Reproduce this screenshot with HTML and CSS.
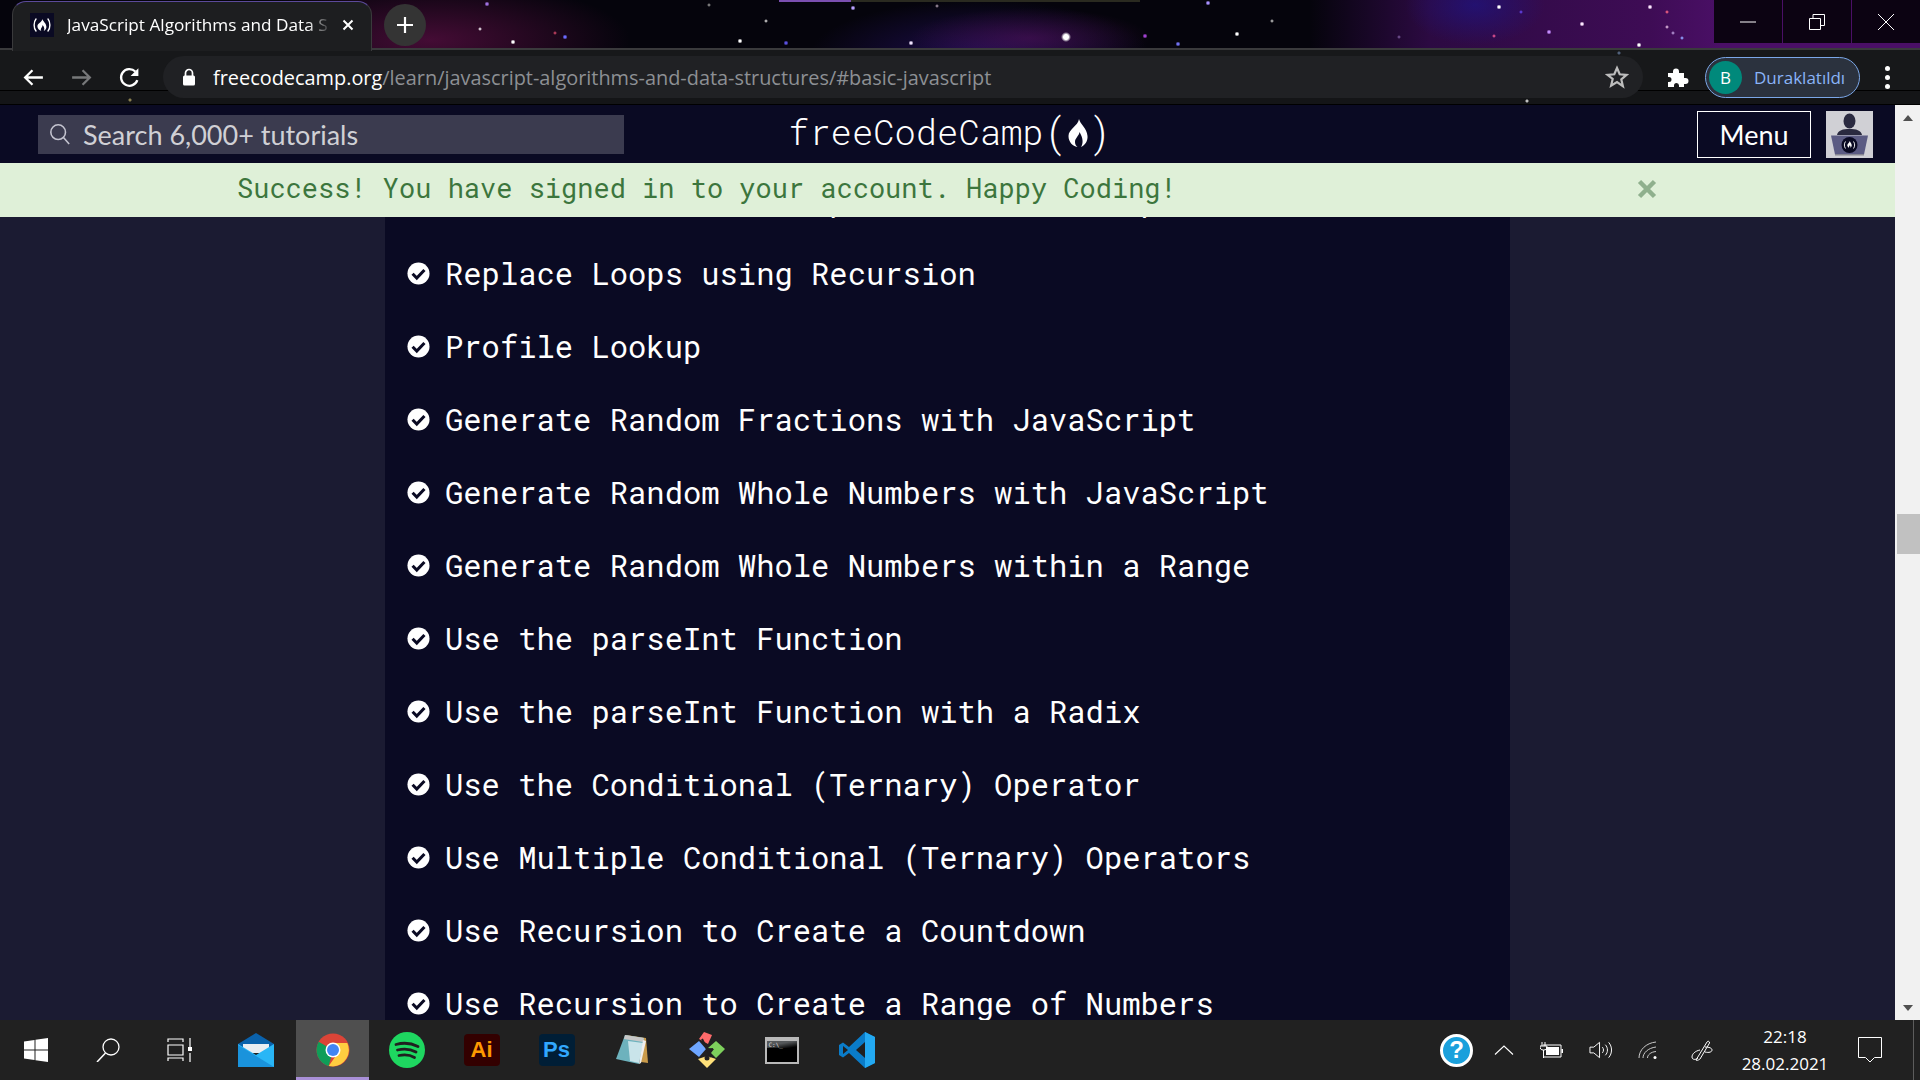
FILE: index.html
```html
<!DOCTYPE html>
<html lang="en">
<head>
    <meta charset="UTF-8">
    <meta name="viewport" content="width=device-width, initial-scale=1.0">
    <title>JavaScript Algorithms and Data Structures | freeCodeCamp.org</title>
    <link rel="stylesheet" href="styles.css">
</head>
<body>

<!-- Chrome window -->
<div class="chrome">
    <div class="titlebar">
        <div class="tab">
            <svg class="tab-icon" viewBox="0 0 24 24"><rect width="24" height="24" fill="#0a0a23"/><path d="M6 6C3.500 9 3.500 15 6 18M18 6c2.500 3 2.500 9 0 12" fill="none" stroke="#fff" stroke-width="1.400" stroke-linecap="round"/><path d="M12.500 6c.4 2.500 3.700 4 3.900 7.700.1 1.800-1 3.400-2.700 4.300 1-1.800.8-3.500-1-6-.2 2-1.900 2.800-1.900 4.700 0 .5.200 1 .6 1.300-2.300-.5-4-2.500-4-4.700 0-3.300 4.600-4 5.100-7.300z" fill="#fff"/></svg>
            <span class="tab-title">JavaScript Algorithms and Data S</span>
            <svg class="tab-close" viewBox="0 0 12 12"><path d="M1.500 1.500l9 9M10.500 1.500l-9 9" stroke="#fff" stroke-width="2"/></svg>
        </div>
        <div class="new-tab">
            <svg viewBox="0 0 18 18" width="18" height="18"><path d="M9 1v16M1 9h16" stroke="#fff" stroke-width="2.200"/></svg>
        </div>
        <div class="load-strip"></div>
        <div class="window-btns">
            <div class="window-btn"><svg viewBox="0 0 16 16" width="16" height="16"><path d="M0 8h16" stroke="#fff"/></svg></div>
            <div class="window-btn"><svg viewBox="0 0 16 16" width="16" height="16"><path d="M.5 4.500h11v11H.5zM4 4.500V.5h11.500v11h-4" fill="none" stroke="#fff"/></svg></div>
            <div class="window-btn"><svg viewBox="0 0 16 16" width="16" height="16"><path d="M0 0l16 16M16 0L0 16" stroke="#fff"/></svg></div>
        </div>
    </div>
    <div class="toolbar">
        <svg class="tool-icon" viewBox="0 0 24 24"><path d="M21 12H4M11 5l-7 7 7 7" fill="none" stroke="#fff" stroke-width="2.200"/></svg>
        <svg class="tool-icon" viewBox="0 0 24 24"><path d="M3 12h17M13 5l7 7-7 7" fill="none" stroke="#77787a" stroke-width="2.200"/></svg>
        <svg class="tool-icon" viewBox="0 0 24 24"><path d="M19.500 14.500A8 8 0 1 1 17.600 6.300" fill="none" stroke="#fff" stroke-width="2.200"/><path d="M20.500 3v7.500H13z" fill="#fff"/></svg>
        <div class="omnibox">
            <svg class="lock" viewBox="0 0 14 18"><path d="M3.500 8V5a3.500 3.500 0 0 1 7 0v3" fill="none" stroke="#fff" stroke-width="1.700"/><rect x="1" y="7.500" width="12" height="10" rx="1.500" fill="#fff"/></svg>
            <span class="url"><span class="url-host">freecodecamp.org</span>/learn/javascript-algorithms-and-data-structures/#basic-javascript</span>
            <svg class="star" viewBox="0 0 24 24"><path d="M12 3l2.700 6.300 6.800.6-5.200 4.500 1.600 6.700L12 17l-5.900 3.600 1.600-6.700L2.500 9.900l6.800-.6z" fill="none" stroke="#bdbdbd" stroke-width="2.200"/></svg>
        </div>
        <svg class="puzzle" viewBox="0 0 24 24"><path d="M3 8h5V6.500a3 3 0 0 1 6 0V8h5v5h1.500a3 3 0 0 1 0 6H19v3h-5v-1.500a2.500 2.500 0 0 0-5 0V22H3v-5h1a2.500 2.500 0 0 0 0-5H3z" fill="#fff"/></svg>
        <div class="profile">
            <span class="profile-avatar">B</span>
            <span class="profile-name">Duraklatıldı</span>
        </div>
        <div class="dots"><i></i><i></i><i></i></div>
    </div>
</div>

<!-- Page -->
<div class="viewport">
    <div class="page">
        <header class="fcc-header">
            <div class="search">
                <svg class="search-icon" viewBox="0 0 24 24"><circle cx="10" cy="10" r="8" fill="none" stroke="#c4c4d0" stroke-width="1.700"/><path d="M15.800 15.800L22 23" stroke="#c4c4d0" stroke-width="1.700"/></svg>
                <span>Search 6,000+ tutorials</span>
            </div>
            <div class="logo">
                <span>freeCodeCamp</span><span class="paren">(</span><svg class="flame" viewBox="0 0 20 28"><path d="M11 0C12 5 19 9 19.500 17 20 22 17 26 13 28 15.500 24 15 19 11.500 13 11 17 7 19 7 23 7 25 8 27 9.500 28 4.500 27 .5 23 .5 17 .5 10 10 7 11 0z" fill="#fff"/></svg><span class="paren">)</span>
            </div>
            <div class="header-right">
                <div class="menu-btn">Menu</div>
                <svg class="avatar" viewBox="0 0 47 47">
                    <rect width="47" height="47" fill="#d0d0d5"/>
                    <ellipse cx="23.500" cy="10" rx="6" ry="7.500" fill="#2a2a40"/>
                    <path d="M11 24c1-5 6-6 12.500-6s11.500 1 12.500 6z" fill="#2a2a40"/>
                    <path d="M5 24.500h37l-4 19H9z" fill="#5b5b83"/>
                    <rect x="9" y="43" width="29" height="1.500" fill="#858591"/>
                    <circle cx="23.500" cy="34" r="8" fill="#0a0a23"/>
                    <path d="M19.500 30.500c-1.500 2-1.500 5 0 7M27.500 30.500c1.500 2 1.500 5 0 7" fill="none" stroke="#fff" stroke-width=".9"/>
                    <path d="M23.800 30c.3 1.500 1.900 2.200 1.900 4.200 0 1-.5 2-1.400 2.600.3-1 .2-1.700-.6-2.500-.2.800-.8 1.200-.8 1.800 0 .3.100.5.300.7-1.100-.3-1.900-1.400-1.900-2.500 0-1.700 2.200-2.300 2.500-4.300z" fill="#fff"/>
                </svg>
            </div>
        </header>
        <main class="content">
            <div class="flash">
                <span class="flash-text">Success! You have signed in to your account. Happy Coding!</span>
                <svg class="flash-close" viewBox="0 0 20 20"><path d="M2.500 2.500l15 15M17.500 2.500l-15 15" stroke="#8fb08d" stroke-width="4.500"/></svg>
            </div>
            <ul class="lessons">
                <li><svg class="check" viewBox="0 0 24 24"><circle cx="12" cy="12" r="11.500" fill="#fff"/><path d="M5.800 12.300l4.400 4.400 8-8.300" fill="none" stroke="#0a0a23" stroke-width="3.200"/></svg><span>Iterate with JavaScript Do...While Loops</span></li>
                <li><svg class="check" viewBox="0 0 24 24"><circle cx="12" cy="12" r="11.500" fill="#fff"/><path d="M5.800 12.300l4.400 4.400 8-8.300" fill="none" stroke="#0a0a23" stroke-width="3.200"/></svg><span>Replace Loops using Recursion</span></li>
                <li><svg class="check" viewBox="0 0 24 24"><circle cx="12" cy="12" r="11.500" fill="#fff"/><path d="M5.800 12.300l4.400 4.400 8-8.300" fill="none" stroke="#0a0a23" stroke-width="3.200"/></svg><span>Profile Lookup</span></li>
                <li><svg class="check" viewBox="0 0 24 24"><circle cx="12" cy="12" r="11.500" fill="#fff"/><path d="M5.800 12.300l4.400 4.400 8-8.300" fill="none" stroke="#0a0a23" stroke-width="3.200"/></svg><span>Generate Random Fractions with JavaScript</span></li>
                <li><svg class="check" viewBox="0 0 24 24"><circle cx="12" cy="12" r="11.500" fill="#fff"/><path d="M5.800 12.300l4.400 4.400 8-8.300" fill="none" stroke="#0a0a23" stroke-width="3.200"/></svg><span>Generate Random Whole Numbers with JavaScript</span></li>
                <li><svg class="check" viewBox="0 0 24 24"><circle cx="12" cy="12" r="11.500" fill="#fff"/><path d="M5.800 12.300l4.400 4.400 8-8.300" fill="none" stroke="#0a0a23" stroke-width="3.200"/></svg><span>Generate Random Whole Numbers within a Range</span></li>
                <li><svg class="check" viewBox="0 0 24 24"><circle cx="12" cy="12" r="11.500" fill="#fff"/><path d="M5.800 12.300l4.400 4.400 8-8.300" fill="none" stroke="#0a0a23" stroke-width="3.200"/></svg><span>Use the parseInt Function</span></li>
                <li><svg class="check" viewBox="0 0 24 24"><circle cx="12" cy="12" r="11.500" fill="#fff"/><path d="M5.800 12.300l4.400 4.400 8-8.300" fill="none" stroke="#0a0a23" stroke-width="3.200"/></svg><span>Use the parseInt Function with a Radix</span></li>
                <li><svg class="check" viewBox="0 0 24 24"><circle cx="12" cy="12" r="11.500" fill="#fff"/><path d="M5.800 12.300l4.400 4.400 8-8.300" fill="none" stroke="#0a0a23" stroke-width="3.200"/></svg><span>Use the Conditional (Ternary) Operator</span></li>
                <li><svg class="check" viewBox="0 0 24 24"><circle cx="12" cy="12" r="11.500" fill="#fff"/><path d="M5.800 12.300l4.400 4.400 8-8.300" fill="none" stroke="#0a0a23" stroke-width="3.200"/></svg><span>Use Multiple Conditional (Ternary) Operators</span></li>
                <li><svg class="check" viewBox="0 0 24 24"><circle cx="12" cy="12" r="11.500" fill="#fff"/><path d="M5.800 12.300l4.400 4.400 8-8.300" fill="none" stroke="#0a0a23" stroke-width="3.200"/></svg><span>Use Recursion to Create a Countdown</span></li>
                <li><svg class="check" viewBox="0 0 24 24"><circle cx="12" cy="12" r="11.500" fill="#fff"/><path d="M5.800 12.300l4.400 4.400 8-8.300" fill="none" stroke="#0a0a23" stroke-width="3.200"/></svg><span>Use Recursion to Create a Range of Numbers</span></li>
            </ul>
        </main>
    </div>
    <div class="scrollbar">
        <div class="arrow-up"></div>
        <div class="scroll-track"><div class="scroll-thumb"></div></div>
        <div class="arrow-down"></div>
    </div>
</div>

<!-- Windows taskbar -->
<footer class="taskbar">
    <div class="task-slot task-system">
        <svg viewBox="0 0 24 24" width="24" height="24"><path d="M0 3.400L10.500 2v9.500H0zM11.500 1.800L24 0v11.500H11.500zM0 12.500h10.500V22L0 20.600zM11.500 12.500H24V24l-12.500-1.800z" fill="#fff"/></svg>
    </div>
    <div class="task-slot task-system">
        <svg viewBox="0 0 24 24" width="24" height="24"><circle cx="15" cy="9" r="8" fill="none" stroke="#fff" stroke-width="1.300"/><path d="M9.500 15L1 24" stroke="#fff" stroke-width="1.500"/></svg>
    </div>
    <div class="task-slot task-system">
        <svg viewBox="0 0 26 24" width="26" height="24"><path d="M1 4V1h15v3M1 7h15v10H1zM1 23v-3h15v3M23 0v9M23 15v9" fill="none" stroke="#fff" stroke-width="1.200"/><rect x="21" y="9" width="4" height="4" fill="#fff"/></svg>
    </div>
    <div class="task-slot task-mail">
        <svg viewBox="0 0 36 34" width="36" height="34"><path d="M18 0l18 11v4H0v-4z" fill="#0a62ac"/><path d="M5 11h26v9H5z" fill="#e9edf2"/><path d="M0 11l18 11 18-11v23H0z" fill="#29b6f6"/><path d="M0 12l18 11 18 11H0z" fill="#1a93dc"/></svg>
    </div>
    <div class="task-slot task-active">
        <svg viewBox="0 0 34 34" width="34" height="34">
            <circle cx="17" cy="17" r="16.500" fill="#db4437"/>
            <path d="M17 17L2.700 8.800A16.500 16.500 0 0 0 12.700 33z" fill="#0f9d58"/>
            <path d="M17 10h14.300A16.500 16.500 0 0 1 17 33.500L12.700 33 24 17z" fill="#ffcd40"/>
            <circle cx="17" cy="17" r="7.500" fill="#fff"/>
            <circle cx="17" cy="17" r="6" fill="#4285f4"/>
        </svg>
    </div>
    <div class="task-slot">
        <svg viewBox="0 0 36 36" width="36" height="36"><circle cx="18" cy="18" r="18" fill="#1ed760"/><path d="M7 12.500c7-2 15-1.500 22 2M8.500 18c6-1.500 13-1 18.500 2M10 23.500c5-1 11-.7 15.500 2" fill="none" stroke="#202020" stroke-width="2.800" stroke-linecap="round"/></svg>
    </div>
    <div class="task-slot">
        <div class="app-tile tile-ai">Ai</div>
    </div>
    <div class="task-slot">
        <div class="app-tile tile-ps">Ps</div>
    </div>
    <div class="task-slot">
        <svg viewBox="0 0 34 32" width="34" height="32"><path d="M11 1l20 3 2 25-7-1z" fill="#c99a4a"/><path d="M10 1l19 3-5 26L1 25z" fill="#6db2bd"/><path d="M10 1l19 3-1 4L9 5z" fill="#c7c7c7"/><path d="M13 7l15 2-4 20-9-2z" fill="#c9e4ea"/><path d="M28 6l3 1-5 22-2 1z" fill="#eee"/></svg>
    </div>
    <div class="task-slot">
        <svg viewBox="0 0 36 36" width="36" height="36"><path d="M15 0l8 3-4 9-9-5z" fill="#ff6b6b"/><path d="M10 9l7 8-7 8-10-8z" fill="#6ea6ff"/><path d="M27 9l9 8-9 9-5-5 3-4-6-1z" fill="#7ed05c"/><path d="M18 24l9 3-9 9-9-9z" fill="#ffe17a"/><circle cx="18" cy="26" r="2.500" fill="#202020"/><path d="M13 7l9 18M18 18l6-1" stroke="#202020" stroke-width="2"/></svg>
    </div>
    <div class="task-slot">
        <div class="terminal"><span class="terminal-bar"></span><span class="terminal-text">C:\_</span></div>
    </div>
    <div class="task-slot">
        <svg viewBox="0 0 36 36" width="36" height="36"><path d="M26 0l10 5v26l-10 5L10 21l-6 4.500L0 23v-10l4-2.500 6 4.500z" fill="#0a7cc9"/><path d="M26 0l10 5v26l-10 5z" fill="#23a9f2"/><path d="M4 14l5 4-5 4zM26 10l-9 8 9 8z" fill="#202020"/></svg>
    </div>

    <div class="tray">
        <div class="help">?</div>
        <div class="tray-slot"><svg viewBox="0 0 20 10" width="20" height="10"><path d="M1 9.500l9-8.500 9 8.500" fill="none" stroke="#fff" stroke-width="1.100"/></svg></div>
        <div class="tray-slot"><svg viewBox="0 0 24 16" width="24" height="16"><path d="M3 3h18v12H4" fill="none" stroke="#fff"/><rect x="6" y="5" width="13" height="8" fill="#fff"/><path d="M21.500 7H23v4h-1.500" fill="#fff"/><path d="M2 0v4M5 0v4M0 4h7c0 3-1 4-3.500 4S0 7 0 4zM3.500 8v8" fill="none" stroke="#fff"/></svg></div>
        <div class="tray-slot"><svg viewBox="0 0 24 18" width="23" height="18"><path d="M1 6h4l6-5v16l-6-5H1zM14 6c1.500 2 1.500 4 0 6M17 3.500c3 3 3 8 0 11M20.500 1c4 4.500 4 11.500 0 16" fill="none" stroke="#fff"/></svg></div>
        <div class="tray-slot"><svg viewBox="0 0 20 18" width="20" height="18"><path d="M1 17C1 9 8 2 18 1M5 17c0-5 5-10 13-11M9.500 17c0-3 3-6 8.500-6.500" fill="none" stroke="#c9c9c9"/><circle cx="17" cy="16.500" r="1.500" fill="#fff"/></svg></div>
        <div class="tray-slot tray-slot-pen"><svg viewBox="0 0 22 22" width="22" height="22"><path d="M5 21l11-18c1-1.500 3-.5 2.500 1L9 20c-1 1-4 2-4 1z M9 11c-5 1-8 4-8 7 0 3 4 3 6 1M14 8c4 0 7 1 7 3s-3 3-7 2" fill="none" stroke="#fff"/></svg></div>
        <div class="clock"><span>22:18</span><span>28.02.2021</span></div>
        <svg class="notify" viewBox="0 0 24 26" width="24" height="26"><path d="M.5.500h23v20h-7L12 25l-4.500-4.500h-7z" fill="none" stroke="#fff"/></svg>
        <div class="show-desktop"></div>
    </div>
</footer>

</body>
</html>
```

FILE: styles.css
```css
* {
    box-sizing: border-box;
}
body {
    margin: 0;
    width: 1920px;
    height: 1080px;
    overflow: hidden;
    display: flex;
    flex-direction: column;
    background-color: #1b1b32;
    font-family: 'Open Sans', sans-serif;
}

/* browser frame */
.chrome {
    height: 105px;
    flex-shrink: 0;
    display: flex;
    flex-direction: column;
    background-color: #05040c;
    background-image:
        radial-gradient(circle at 1066px 37px, #fff 0 2.5px, rgba(255,255,255,0) 5px),
        radial-gradient(circle at 513px 42px, #fff 0 1px, rgba(255,255,255,0) 2.5px),
        radial-gradient(circle at 740px 41px, #fff 0 1px, rgba(255,255,255,0) 2.5px),
        radial-gradient(circle at 911px 43px, #f0e4ff 0 1px, rgba(255,255,255,0) 2.5px),
        radial-gradient(circle at 1237px 34px, #fff 0 1px, rgba(255,255,255,0) 2.5px),
        radial-gradient(circle at 1499px 7px, #fff 0 1px, rgba(255,255,255,0) 2.5px),
        radial-gradient(circle at 1650px 7px, #fde8ff 0 1px, rgba(255,255,255,0) 2.5px),
        radial-gradient(circle at 1582px 24px, #fde8ff 0 1px, rgba(255,255,255,0) 2.5px),
        radial-gradient(circle at 1639px 45px, #fff 0 1px, rgba(255,255,255,0) 2.5px),
        radial-gradient(circle at 1549px 32px, #c48cff 0 1px, rgba(255,255,255,0) 2.5px),
        radial-gradient(circle at 480px 29px, #e8e0e8 0 .5px, rgba(255,255,255,0) 2px),
        radial-gradient(circle at 487px 4px, #a070e0 0 1px, rgba(255,255,255,0) 2.5px),
        radial-gradient(circle at 565px 37px, #6a6aff 0 1px, rgba(255,255,255,0) 2.5px),
        radial-gradient(circle at 555px 33px, #c04060 0 .5px, rgba(255,255,255,0) 2px),
        radial-gradient(circle at 786px 43px, #5a50e0 0 1px, rgba(255,255,255,0) 2.5px),
        radial-gradient(circle at 853px 8px, #b8a0ff 0 1px, rgba(255,255,255,0) 2.5px),
        radial-gradient(circle at 766px 21px, #c8c8c8 0 .5px, rgba(255,255,255,0) 2px),
        radial-gradient(circle at 709px 5px, #8a8a8a 0 .5px, rgba(255,255,255,0) 2px),
        radial-gradient(circle at 937px 6px, #9a8a9a 0 .5px, rgba(255,255,255,0) 2px),
        radial-gradient(circle at 1208px 3px, #a890ff 0 1px, rgba(255,255,255,0) 2.5px),
        radial-gradient(circle at 1272px 21px, #b0b0b0 0 .5px, rgba(255,255,255,0) 2px),
        radial-gradient(circle at 1145px 36px, #a040d0 0 1px, rgba(255,255,255,0) 2.5px),
        radial-gradient(circle at 1178px 44px, #7070f0 0 1px, rgba(255,255,255,0) 2.5px),
        radial-gradient(circle at 1667px 12px, #f06080 0 .5px, rgba(255,255,255,0) 2px),
        radial-gradient(circle at 1667px 27px, #d8b0d8 0 .5px, rgba(255,255,255,0) 2px),
        radial-gradient(circle at 1673px 33px, #b090d0 0 .5px, rgba(255,255,255,0) 2px),
        radial-gradient(circle at 1682px 38px, #90a0ff 0 .5px, rgba(255,255,255,0) 2px),
        radial-gradient(circle at 1521px 12px, #6040e0 0 .5px, rgba(255,255,255,0) 2px),
        radial-gradient(circle at 1494px 36px, #e05090 0 .5px, rgba(255,255,255,0) 2px),
        radial-gradient(circle at 1399px 37px, #705090 0 .5px, rgba(255,255,255,0) 2px),
        radial-gradient(ellipse 120px 30px at 1030px 38px, rgba(110,20,110,.4), rgba(0,0,0,0)),
        radial-gradient(ellipse 70px 40px at 1475px 5px, rgba(30,20,130,.7), rgba(0,0,0,0)),
        radial-gradient(ellipse 200px 60px at 430px 40px, rgba(95,15,70,.7), rgba(0,0,0,0)),
        radial-gradient(ellipse 170px 55px at 980px 55px, rgba(45,20,120,.6), rgba(0,0,0,0)),
        linear-gradient(to right, rgba(0,0,0,0) 1310px, #2c0a42 1430px, #3e0c55 1650px, #4a0f66 1720px);
}
.titlebar {
    height: 50px;
    display: flex;
    position: relative;
    border-bottom: 2px solid #3a3a3c;
}
.tab {
    width: 360px;
    height: 50px;
    margin-left: 12px;
    margin-top: 1px;
    padding: 0 17px 4px 17px;
    display: flex;
    align-items: center;
    background-color: #1d1e20;
    border: 1px solid #3a3a3c;
    border-bottom: none;
    border-radius: 14px 14px 0 0;
    border-top-color: #5b4a9a;
    color: #fff;
    font-size: 17.2px;
    z-index: 1;
}
.tab-icon {
    width: 24px;
    height: 24px;
    flex-shrink: 0;
}
.tab-title {
    margin-left: 13px;
    flex: 1;
    white-space: nowrap;
    -webkit-mask-image: linear-gradient(to right, #000 92%, rgba(0,0,0,.15) 100%);
}
.tab-close {
    width: 12px;
    height: 12px;
    margin-left: 14px;
    flex-shrink: 0;
}
.new-tab {
    width: 42px;
    height: 42px;
    margin: 4px 0 0 12px;
    border-radius: 50%;
    background-color: #343434;
    display: flex;
    align-items: center;
    justify-content: center;
}
.load-strip {
    position: absolute;
    left: 779px;
    top: 0;
    width: 361px;
    height: 2px;
    background: linear-gradient(to right, #7b4fb0 0 72px, #2a2a20 72px);
}
.window-btns {
    position: absolute;
    right: 0;
    top: 0;
    height: 43px;
    display: flex;
    gap: 1px;
}
.window-btn {
    width: 68px;
    height: 43px;
    background-color: #0c0312;
    display: flex;
    align-items: center;
    justify-content: center;
}
.toolbar {
    height: 55px;
    display: flex;
    align-items: center;
    padding: 0 0 0 21px;
    background-color: #17181a;
    background-image:
        radial-gradient(circle at 130px 50px, #8a8050 0 1px, rgba(0,0,0,0) 2px),
        radial-gradient(circle at 1527px 51px, #c0c0c0 0 1px, rgba(0,0,0,0) 2px),
        radial-gradient(circle at 1619px 3px, #50607a 0 1px, rgba(0,0,0,0) 2px),
        linear-gradient(to bottom, rgba(0,0,0,0) 40px, #000 40px, #000 41px, #141517 41px);
    border-bottom: 1px solid #000;
}
.tool-icon {
    width: 25px;
    height: 25px;
    margin-right: 23px;
    flex-shrink: 0;
}
.omnibox {
    width: 1480px;
    height: 42px;
    margin-left: -2px;
    border-radius: 21px;
    background-color: #202124;
    display: flex;
    align-items: center;
    padding: 0 14px 0 19px;
    flex-shrink: 0;
}
.lock {
    width: 14px;
    height: 18px;
    flex-shrink: 0;
}
.url {
    margin-left: 17px;
    flex: 1;
    color: #8d9094;
    font-size: 19.9px;
    white-space: nowrap;
}
.url-host {
    color: #fff;
}
.star {
    width: 24px;
    height: 24px;
}
.puzzle {
    width: 24px;
    height: 24px;
    margin-left: 22px;
    flex-shrink: 0;
}
.profile {
    width: 155px;
    height: 41px;
    margin-left: 16px;
    padding-left: 3px;
    border: 1.5px solid #7ba7e8;
    border-radius: 21px;
    background-color: #2b323e;
    display: flex;
    align-items: center;
    flex-shrink: 0;
}
.profile-avatar {
    width: 33px;
    height: 33px;
    border-radius: 50%;
    background-color: #00897b;
    color: #fff;
    font-size: 17px;
    display: flex;
    align-items: center;
    justify-content: center;
}
.profile-name {
    margin-left: 12px;
    color: #8ab4f8;
    font-size: 17px;
    white-space: nowrap;
}
.dots {
    margin-left: 25px;
    display: flex;
    flex-direction: column;
    gap: 4px;
}
.dots i {
    display: block;
    width: 5px;
    height: 5px;
    border-radius: 50%;
    background-color: #fff;
}

/* page area */
.viewport {
    flex: 1;
    display: flex;
    min-height: 0;
}
.page {
    flex: 1;
    display: flex;
    flex-direction: column;
    min-width: 0;
}
.fcc-header {
    height: 58px;
    flex-shrink: 0;
    display: flex;
    align-items: center;
    position: relative;
    background-color: #0a0a23;
    padding: 0 22px 0 38px;
}
.search {
    width: 586px;
    height: 39px;
    background-color: #3b3b4f;
    color: #d0d0d5;
    font-family: 'Lato', sans-serif;
    font-size: 27px;
    display: flex;
    align-items: center;
    padding-left: 11px;
}
.search-icon {
    width: 22px;
    height: 22px;
    margin-right: 12px;
}
.logo {
    position: absolute;
    left: 788px;
    top: 1px;
    height: 50px;
    display: flex;
    align-items: center;
    color: #fff;
    font-family: 'Roboto Mono', 'DejaVu Sans Mono', monospace;
    font-weight: 300;
    font-size: 35.5px;
}
.paren {
    font-size: 40px;
}
.flame {
    width: 20px;
    height: 28px;
    margin: 3px 0 0;
}
.header-right {
    margin-left: auto;
    display: flex;
    align-items: center;
    gap: 15px;
}
.menu-btn {
    width: 114px;
    height: 47px;
    border: 1.5px solid #fff;
    color: #fff;
    font-family: 'Lato', sans-serif;
    font-size: 27px;
    display: flex;
    align-items: center;
    justify-content: center;
}
.avatar {
    width: 47px;
    height: 47px;
}
.content {
    flex: 1;
    min-height: 0;
    overflow: hidden;
    position: relative;
}
.flash {
    position: absolute;
    left: 0;
    right: 0;
    top: 0;
    height: 54px;
    padding: 0 0 6px 237px;
    display: flex;
    align-items: center;
    background-color: #dff0d8;
    color: #3c763d;
    font-family: 'Roboto Mono', 'DejaVu Sans Mono', monospace;
    font-size: 27px;
    white-space: nowrap;
    z-index: 2;
}
.flash-close {
    position: absolute;
    left: 1637px;
    top: 16px;
    width: 20px;
    height: 20px;
}
.lessons {
    list-style: none;
    width: 1125px;
    margin: 0 0 0 385px;
    padding: 1px 0 0 22px;
    background-color: #0a0a23;
    min-height: 100%;
}
.lessons li {
    height: 73px;
    padding-bottom: 2px;
    display: flex;
    align-items: center;
    gap: 15px;
    color: #fff;
    font-family: 'Roboto Mono', 'DejaVu Sans Mono', monospace;
    font-size: 30.5px;
    white-space: nowrap;
}
.check {
    width: 23px;
    height: 23px;
    margin-top: 2px;
    flex-shrink: 0;
}

/* scrollbar */
.scrollbar {
    width: 25px;
    flex-shrink: 0;
    background-color: #f1f1f1;
    display: flex;
    flex-direction: column;
    align-items: center;
}
.arrow-up {
    margin-top: 10px;
    border: 5px solid transparent;
    border-top: none;
    border-bottom: 6px solid #505050;
    width: 10px;
}
.arrow-down {
    margin-bottom: 9px;
    border: 5px solid transparent;
    border-bottom: none;
    border-top: 6px solid #505050;
    width: 10px;
}
.scroll-track {
    flex: 1;
    width: 100%;
    padding-top: 393px;
}
.scroll-thumb {
    height: 40px;
    margin-left: 2px;
    background-color: #c1c1c1;
}

/* taskbar */
.taskbar {
    height: 60px;
    flex-shrink: 0;
    display: flex;
    background-color: #212121;
}
.task-slot {
    width: 75px;
    height: 60px;
    display: flex;
    align-items: center;
    justify-content: center;
    flex-shrink: 0;
}
.task-system {
    width: 72px;
}
.task-mail {
    width: 80px;
}
.task-active {
    width: 73px;
    background-color: #4f4f4f;
    border-bottom: 3px solid #a990d8;
    padding-top: 3px;
}
.app-tile {
    width: 36px;
    height: 32px;
    border-radius: 4px;
    font-family: 'Liberation Sans', sans-serif;
    font-weight: bold;
    font-size: 22px;
    display: flex;
    align-items: center;
    justify-content: center;
}
.tile-ai {
    background-color: #330000;
    color: #ff9a00;
}
.tile-ps {
    background-color: #001e36;
    color: #31a8ff;
}
.terminal {
    width: 34px;
    height: 27px;
    position: relative;
    background-color: #000;
    border: 2px solid #b9b9b9;
    border-top-width: 4px;
    display: flex;
}
.terminal-bar {
    position: absolute;
    left: 0;
    right: 0;
    top: 0;
    height: 7px;
    background: linear-gradient(170deg, #55585a 40%, #000 90%);
}
.terminal-text {
    position: relative;
    color: #ddd;
    font-family: 'DejaVu Sans Mono', monospace;
    font-size: 6px;
    margin-left: 2px;
}
.tray {
    margin-left: auto;
    display: flex;
    align-items: center;
    height: 60px;
    color: #fff;
}
.help {
    width: 33px;
    height: 33px;
    margin-right: 7px;
    border-radius: 50%;
    background-color: #1aa0dc;
    border: 3px solid #fff;
    color: #fff;
    font-family: 'Liberation Sans', sans-serif;
    font-weight: bold;
    font-size: 24px;
    display: flex;
    align-items: center;
    justify-content: center;
}
.tray-slot {
    width: 48px;
    display: flex;
    justify-content: center;
}
.tray-slot-pen {
    width: 60px;
}
.clock {
    width: 100px;
    height: 60px;
    margin-left: 3px;
    padding: 3px 0;
    display: flex;
    flex-direction: column;
    align-items: center;
    justify-content: space-around;
    font-size: 17px;
}
.notify {
    margin-left: 23px;
    flex-shrink: 0;
}
.show-desktop {
    width: 1px;
    height: 60px;
    margin-left: 31px;
    margin-right: 6px;
    background-color: #5c5c5c;
}
```
